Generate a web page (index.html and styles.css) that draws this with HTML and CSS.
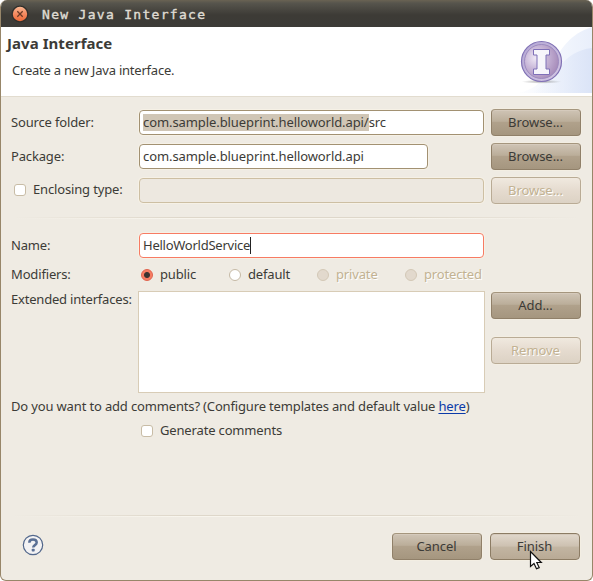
FILE: index.html
```html
<!DOCTYPE html>
<html lang="en">
<head>
<meta charset="utf-8">
<title>New Java Interface</title>
<link rel="stylesheet" href="styles.css">
</head>
<body>
<div class="window">
  <div class="titlebar">
    <svg class="close" width="18" height="18" viewBox="0 0 18 18">
      <defs><linearGradient id="cg" x1="0" y1="0" x2="0" y2="1"><stop offset="0" stop-color="#f9b590"/><stop offset=".5" stop-color="#f48a60"/><stop offset="1" stop-color="#ee6a38"/></linearGradient></defs>
      <circle cx="9" cy="9" r="8.5" fill="#302f2b"/>
      <circle cx="9" cy="9" r="7.2" fill="url(#cg)"/>
      <path d="M6.300 6.300l5.400 5.400M11.700 6.300l-5.400 5.400" stroke="#6b3a26" stroke-width="1.300"/>
    </svg>
    <span class="title">New Java Interface</span>
  </div>
  <header class="banner">
    <div class="banner-text">
      <h1>Java Interface</h1>
      <p>Create a new Java interface.</p>
    </div>
    <svg class="art" width="75" height="69" viewBox="0 0 75 69">
      <defs>
        <linearGradient id="sw1"><stop offset="0" stop-color="#eef3fc" stop-opacity="0"/><stop offset=".5" stop-color="#f4f7fd"/><stop offset="1" stop-color="#e9effb"/></linearGradient>
        <linearGradient id="sw2"><stop offset="0" stop-color="#e4ebfa" stop-opacity="0"/><stop offset="1" stop-color="#dbe4f7"/></linearGradient>
        <radialGradient id="ball" cx=".32" cy=".4" r=".7"><stop offset="0" stop-color="#eee8f5"/><stop offset=".45" stop-color="#c9b8d9"/><stop offset="1" stop-color="#a78cba"/></radialGradient>
        <linearGradient id="ring" x1="0" y1="0" x2="1" y2="1"><stop offset="0" stop-color="#b3a7d4"/><stop offset="1" stop-color="#d4c6e3"/></linearGradient>
        <radialGradient id="sh"><stop offset="0" stop-color="#777" stop-opacity=".6"/><stop offset="1" stop-color="#777" stop-opacity="0"/></radialGradient>
      </defs>
      <path d="M0 66C42 60 30 14 75 0v66z" fill="url(#sw1)"/>
      <path d="M15 66C40 50 45 24 75 21v45z" fill="url(#sw2)"/>
      <ellipse cx="24.500" cy="54.700" rx="20" ry="2" fill="url(#sh)"/>
      <circle cx="24.500" cy="34.500" r="20" fill="url(#ring)" stroke="#8172b5" stroke-width="1.200"/>
      <circle cx="24.500" cy="34.500" r="17" fill="url(#ball)" stroke="#9a88bd" stroke-width=".9"/>
      <path d="M16.500 22.500h16v5.500h-3.500v14h3.500v5.500h-16v-5.500h3.500v-14h-3.500z" fill="#f6f5fb" stroke="#7f70b8" stroke-width="1"/>
    </svg>
  </header>

  <main class="form">
    <div class="row first">
      <span class="label">Source folder:</span>
      <div class="input"><span class="sel">com.sample.blueprint.helloworld.api/</span><span>src</span></div>
      <button class="btn"><span>Browse...</span></button>
    </div>
    <div class="row second">
      <span class="label">Package:</span>
      <div class="input short"><span>com.sample.blueprint.helloworld.api</span></div>
      <button class="btn"><span>Browse...</span></button>
    </div>
    <div class="row third">
      <span class="label check-label"><i class="check"></i><span class="check-text">Enclosing type:</span></span>
      <div class="input disabled"></div>
      <button class="btn off"><span>Browse...</span></button>
    </div>
    <div class="rule"></div>
    <div class="row name">
      <span class="label">Name:</span>
      <div class="input focus"><span>HelloWorldService</span><i class="caret"></i></div>
    </div>
    <div class="row mods">
      <span class="label">Modifiers:</span>
      <div class="radios">
        <span class="opt"><i class="radio on"></i><span>public</span></span>
        <span class="opt"><i class="radio"></i><span>default</span></span>
        <span class="opt dim"><i class="radio"></i><span>private</span></span>
        <span class="opt dim"><i class="radio"></i><span>protected</span></span>
      </div>
    </div>
    <div class="row ext">
      <span class="label">Extended interfaces:</span>
      <div class="list"></div>
      <div class="stack">
        <button class="btn">Add...</button>
        <button class="btn off">Remove</button>
      </div>
    </div>
    <p class="question">Do you want to add comments? (Configure templates and default value <a>here</a>)</p>
    <div class="generate"><i class="check"></i><span>Generate comments</span></div>
  </main>

  <div class="rule bottom"></div>
  <footer class="footer">
    <svg class="help" width="22" height="22" viewBox="0 0 22 22">
      <circle cx="11" cy="11" r="9.700" fill="#f3f2f3" stroke="#53688c" stroke-width="1.200"/>
      <path d="M7.300 8.700C7.300 6.700 8.800 5.500 11 5.500s3.700 1.200 3.700 3c0 2.600-3.500 2.600-3.500 5" fill="none" stroke="#5b7095" stroke-width="2.500"/>
      <rect x="9.700" y="14.800" width="3" height="2.700" rx=".8" fill="#5b7095"/>
    </svg>
    <button class="btn">Cancel</button>
    <button class="btn hover">Finish</button>
  </footer>
  <svg class="cursor" width="14" height="21" viewBox="0 0 14 21">
    <path d="M1.500 1.500v15l3.500-3 2.500 5.300 2.700-1.200-2.400-5.100h4.500z" fill="#fff" stroke="#111" stroke-width="1.200"/>
  </svg>
</div>
</body>
</html>
```

FILE: styles.css
```css
* { box-sizing: border-box; }
body { margin: 0; background: #fff; font: 13px/18px "Noto Sans", sans-serif; letter-spacing: -.155px; color: #3c3b37; overflow: hidden; }
.window { position: relative; display: flex; flex-direction: column; width: 593px; height: 581px; background: #efebe3; border: 1px solid #978669; border-top: 0; border-radius: 7px 7px 6px 6px; overflow: hidden; }
.titlebar { display: flex; align-items: center; flex: none; height: 27px; padding: 1px 0 0 10px; background: linear-gradient(#6a6353 0, #57554d 3px, #3d3b36 15px, #3c3b37); }
.title { margin-left: 13px; padding-top: 1px; font: 13px/18px "DejaVu Sans Mono", monospace; letter-spacing: 1.3px; color: #dfdbd2; -webkit-text-stroke: .4px #dfdbd2; white-space: nowrap; }
.banner { display: flex; justify-content: space-between; flex: none; height: 70px; background: #fff; border-bottom: 1px solid #e2dccf; }
.banner-text { padding: 7px 0 0 6px; }
h1 { margin: 0; font-size: 15px; line-height: 19px; font-weight: 700; letter-spacing: .05px; white-space: nowrap; }
.banner p { margin: 8px 0 0 5px; letter-spacing: -.22px; white-space: nowrap; }
.form { padding: 12px 10px 0; flex: none; height: 418px; }
.row { display: flex; align-items: center; height: 27px; }
.label { flex: none; width: 128px; padding-bottom: 2px; white-space: nowrap; }
.input { display: flex; align-items: center; flex: none; width: 345px; height: 25px; margin-right: 7px; padding: 0 3px; background: #fff; border: 1px solid #a29172; border-radius: 4px; box-shadow: 0 0 0 1px #f6f1e6; letter-spacing: -.085px; white-space: nowrap; }
.input > span { height: 17px; line-height: 17px; }
.input.short { width: 289px; margin-right: 63px; }
.input.disabled { background: #ede8e0; border-color: #cdbfa3; }
.input.focus { border-color: #f77b63; letter-spacing: -.25px; }
.input > span { position: relative; line-height: 16px; }
.input > .sel { background: #d0c6b6; }
.second { margin-top: 7px; }
.third { margin-top: 7px; }
.btn { display: flex; align-items: center; justify-content: center; width: 90px; height: 27px; flex: none; padding: 0 1px 2px 0; font: inherit; letter-spacing: -.05px; color: #3c3b37; border: 1px solid #908069; border-top-color: #a5967e; border-radius: 4px; background: linear-gradient(#cfc4b5, #bbae9a 45%, #b0a18b 50%, #a5967f); box-shadow: inset 0 1px 0 #d5cabc, 0 0 0 1px #f3eee3; }
.btn.off { color: #c2b292; text-shadow: 1px 1px #fff; border-color: #b9ab95; background: linear-gradient(#f0e9df, #e5dbcf 50%, #dcd2c4); box-shadow: 0 0 0 1px #f3eee3; }
.btn.hover { background: linear-gradient(#e1d8cc, #cdc1b1 48%, #c2b5a2 53%, #b9aa95); border-color: #8c7c64; }
.check { display: block; flex: none; width: 12px; height: 12px; background: #fff; border: 1px solid #c8bca6; border-radius: 3px; }
.check-label { display: flex; align-items: center; padding: 0 0 1px 3px; }
.check-label .check { margin-right: 7px; }
.check-text { padding-bottom: 2px; }
.rule { height: 2px; margin: 13px 2px 0; background: linear-gradient(90deg, transparent, #ded7ca 30%, #ded7ca 70%, transparent) top / 100% 1px no-repeat, linear-gradient(90deg, transparent, #f8f5ed 30%, #f8f5ed 70%, transparent) bottom / 100% 1px no-repeat; }
.name { margin-top: 13px; }
.caret { width: 1px; height: 17px; background: #222; }
.mods { height: 20px; margin-top: 6px; }
.radios { display: flex; padding-left: 2px; }
.opt { display: flex; align-items: center; width: 88px; white-space: nowrap; }
.opt > span, .generate > span { padding-bottom: 2px; }
.radio { flex: none; width: 12px; height: 12px; margin-right: 7px; border: 1px solid #c5b9a5; border-radius: 50%; background: #fff; }
.radio.on { border-color: #e0604a; background: radial-gradient(circle, #3c3330 0, #3c3330 2.500px, #f6795f 3.500px, #f9907a); }
.dim { color: #c2b292; text-shadow: 1px 1px #fff; }
.dim .radio { background: #e2d9cd; border-color: #d3c8b6; }
.ext { height: 102px; margin-top: 6px; align-items: flex-start; }
.ext .label { width: 127px; margin-top: -1px; letter-spacing: -.2px; }
.list { width: 347px; height: 102px; margin-right: 6px; flex: none; background: #fff; border: 1px solid #d8ccb6; }
.stack { display: flex; flex-direction: column; gap: 18px; padding-top: 1px; }
.question { margin: 4px 0 0; white-space: nowrap; }
.question a { color: #0b3aa8; text-decoration: underline; text-underline-offset: 2px; }
.generate { display: flex; align-items: center; gap: 7px; margin: 6px 0 0 130px; }
.rule.bottom { flex: none; margin: 0 10px; }
.footer { display: flex; align-items: center; height: 27px; margin: 16px 12px 0 21px; flex: none; }
.help { margin: 0 auto 4px 0; }
.footer .btn + .btn { margin-left: 8px; }
.cursor { position: absolute; left: 528px; top: 550px; }
```
